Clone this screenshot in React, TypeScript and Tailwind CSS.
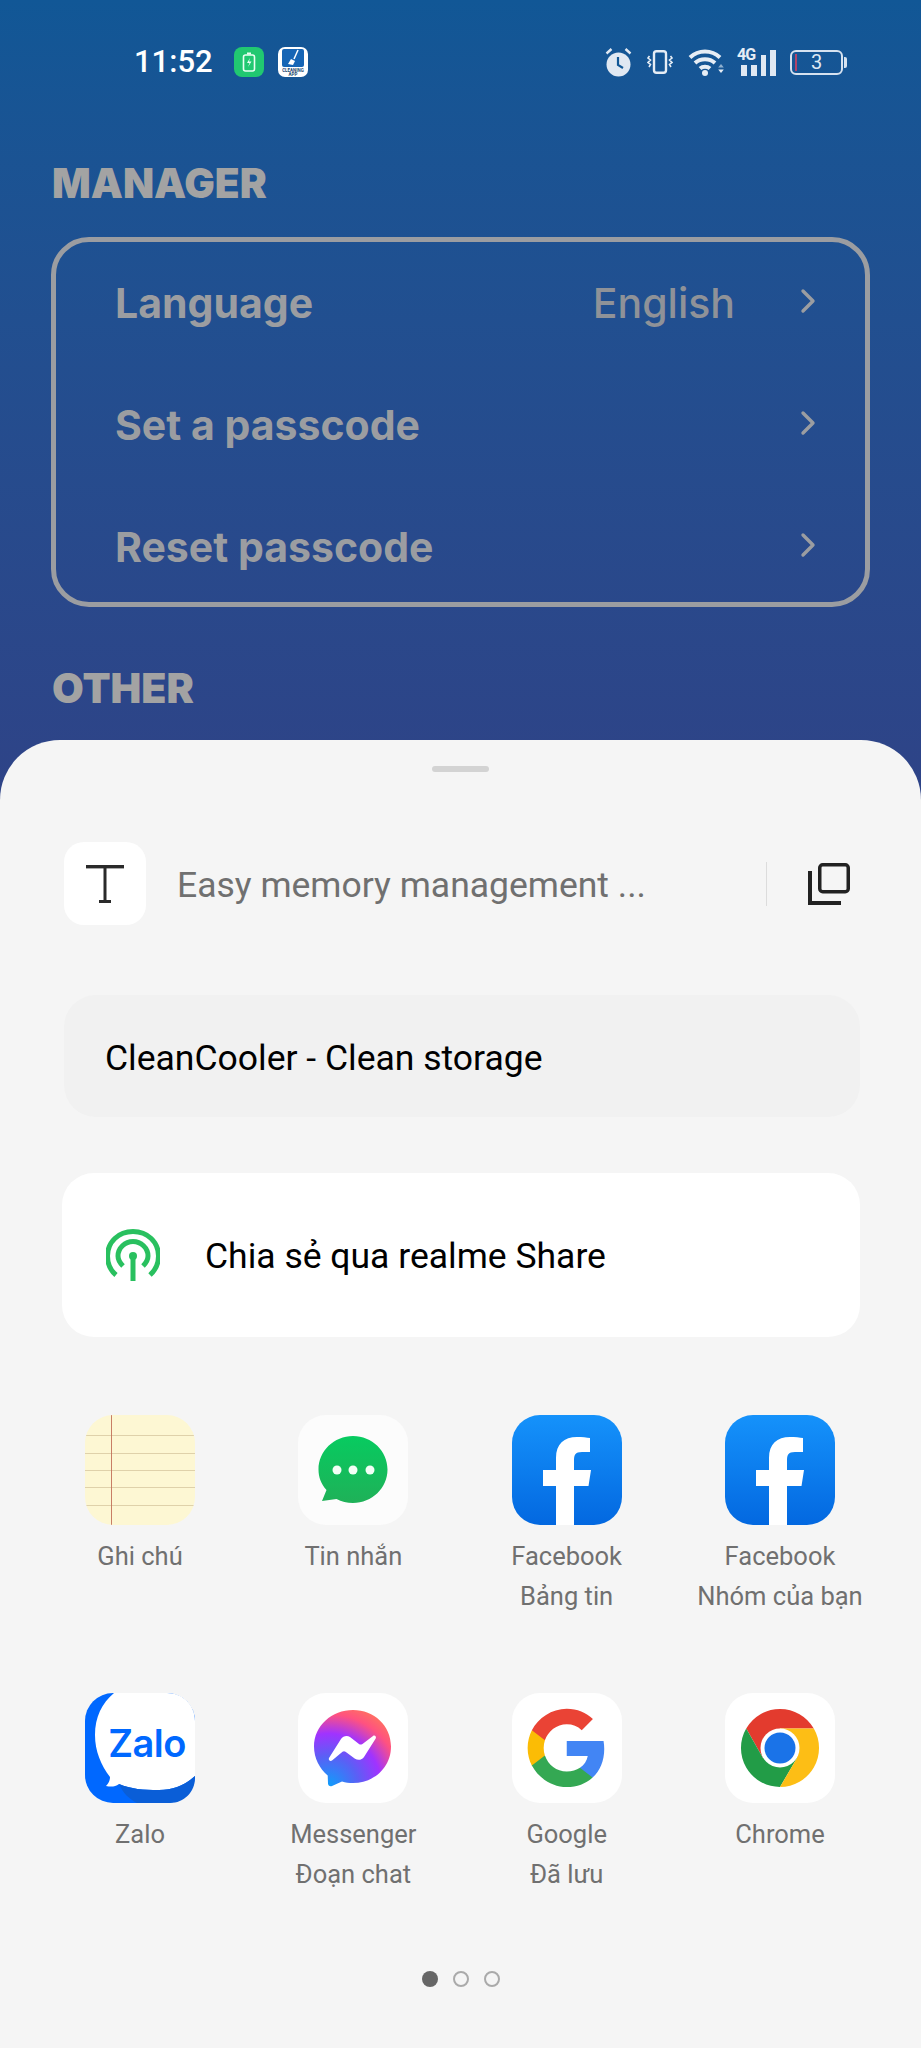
import React from "react";

const F = '"Roboto", "Liberation Sans", sans-serif';

function Chevron() {
  return (
    <svg width="16" height="26" viewBox="0 0 16 26" fill="none" stroke="#9b9da1" strokeWidth="3.400" strokeLinecap="round" strokeLinejoin="round" className="mb-[4px]">
      <path d="M3 3l10 10L3 23" />
    </svg>
  );
}

function Row({ label, value }: { label: string; value?: string }) {
  return (
    <div className="h-[122px] shrink-0 flex items-center pl-[59px] pr-[49px] justify-between">
      <span className="text-[41px] font-bold text-[#9b9da1] leading-none font-[Inter]">{label}</span>
      <div className="flex items-center gap-[65px]">
        {value && <span className="text-[41px] font-medium text-[#8f9298] leading-none font-[Inter]">{value}</span>}
        <Chevron />
      </div>
    </div>
  );
}

function Notes() {
  return (
    <div className="w-[110px] h-[110px] rounded-[28px] overflow-hidden">
      <svg width="110" height="110" viewBox="0 0 110 110">
        <rect width="110" height="110" fill="#fdf7d3" />
        {[20, 38, 55, 72, 90].map((y) => (
          <rect key={y} x="0" y={y} width="110" height="0.8" fill="#d8c7a0" />
        ))}
        <rect x="26" y="0" width="0.9" height="110" fill="#c2705a" />
      </svg>
    </div>
  );
}

function Sms() {
  return (
    <svg width="110" height="110" viewBox="0 0 110 110">
      <defs>
        <linearGradient id="sms" x1="0" y1="0" x2="0" y2="1">
          <stop offset="0" stopColor="#07cb60" />
          <stop offset="1" stopColor="#1fb158" />
        </linearGradient>
      </defs>
      <rect width="110" height="110" rx="28" fill="#fcfcfc" />
      <path d="M55 21c19 0 34.500 15 34.500 33.500S74 88 55 88c-6 0-11.500-1.500-16.500-4L24 86l4.500-11C23 69 20.500 62 20.500 54.500 20.500 36 36 21 55 21z" fill="url(#sms)" />
      <circle cx="39" cy="55" r="4.500" fill="#f2fff6" />
      <circle cx="55" cy="55" r="4.500" fill="#f2fff6" />
      <circle cx="72" cy="55" r="4.500" fill="#f2fff6" />
    </svg>
  );
}

function Facebook({ id }: { id: string }) {
  return (
    <svg width="110" height="110" viewBox="0 0 110 110">
      <defs>
        <linearGradient id={id} x1="0" y1="0" x2="0" y2="1">
          <stop offset="0" stopColor="#1592fb" />
          <stop offset="1" stopColor="#0368e0" />
        </linearGradient>
      </defs>
      <rect width="110" height="110" rx="28" fill={`url(#${id})`} />
      <path d="M44 110V71H31V55h13V43c0-14 8-21 21-21 5 0 10 .500 13 1v14h-8c-7 0-8 3-8 9v9h17l-2.500 16H62v39z" fill="#fff" />
    </svg>
  );
}

function Zalo() {
  return (
    <svg width="110" height="110" viewBox="0 0 110 110">
      <rect width="110" height="110" rx="28" fill="#0068ff" />
      <path d="M29 0H82C98 0 110 12 110 28V83C100 92 88 97 74 97 58 97 46 96 34 91 30 94 26 94 21 93 24 90 25 87 25 84 16 72 10 58 10 42 10 24 17 10 29 0Z" fill="#fff" />
      <path d="M34 91C46 96 58 97 74 97 88 97 100 92 110 83V85C110 99 99 110 85 110H52C44 106 38 100 34 91Z" fill="#0a5ed7" />
      <text x="62" y="64" textAnchor="middle" fontFamily="Inter, sans-serif" fontWeight="600" fontSize="38" letterSpacing="-0.500" fill="#0068ff">Zalo</text>
    </svg>
  );
}

function Messenger() {
  return (
    <svg width="110" height="110" viewBox="0 0 110 110">
      <defs>
        <radialGradient id="msg" cx="0.19" cy="0.99" r="1.1">
          <stop offset="0" stopColor="#0f9dfb" />
          <stop offset="0.35" stopColor="#5a60f5" />
          <stop offset="0.62" stopColor="#a033ff" />
          <stop offset="0.85" stopColor="#ff5280" />
          <stop offset="1" stopColor="#ff7061" />
        </radialGradient>
      </defs>
      <rect width="110" height="110" rx="28" fill="#fff" />
      <path d="M55 17c21 0 38 15.500 38 36.500S76 90 55 90c-4 0-7.500-.500-11-1.500L34 93c-2 1-4-.500-4-2.500l-.3-8C21.500 75.500 16 65 16 53.500 16 32.500 34 17 55 17z" fill="url(#msg)" />
      <path d="M31 65l12-19c2-3 6-4 9-2l9 7c1 .7 2 .7 3.500 0L75 43c1.700-1.300 3.800.7 2.700 2.500L66 64c-2 3-6 3.700-9 1.700l-9.500-7c-1-.7-2-.7-3 0L34 67.500c-1.800 1.300-4-.7-3-2.500z" fill="#fff" />
    </svg>
  );
}

function Google() {
  return (
    <svg width="110" height="110" viewBox="0 0 110 110">
      <rect width="110" height="110" rx="28" fill="#fff" />
      <g transform="translate(14 15) scale(1.63)">
        <path d="M48 25.100c0-1.700-.15-3.300-.43-4.900H25v9.300h12.900c-.56 3-2.250 5.500-4.800 7.200v6h7.750C45.400 38.500 48 32.400 48 25.100z" fill="#4285f4" />
        <path d="M25 48.500c6.500 0 11.900-2.150 15.850-5.800l-7.750-6c-2.150 1.450-4.900 2.300-8.100 2.300-6.200 0-11.500-4.200-13.400-9.850H3.600v6.200C7.550 42.800 15.700 48.500 25 48.500z" fill="#34a853" />
        <path d="M11.600 29.150c-.5-1.450-.75-3-.75-4.650s.27-3.200.75-4.650V13.650H3.600C2 16.850 1 20.550 1 24.500s1 7.650 2.600 10.850l8-6.200z" fill="#fbbc05" />
        <path d="M25 10c3.550 0 6.700 1.200 9.200 3.600l6.850-6.850C36.900 2.900 31.500.500 25 .500 15.700.500 7.550 6.200 3.600 13.650l8 6.200C13.500 14.200 18.800 10 25 10z" fill="#ea4335" />
      </g>
    </svg>
  );
}

function Chrome() {
  return (
    <svg width="110" height="110" viewBox="0 0 110 110">
      <rect width="110" height="110" rx="28" fill="#fff" />
      <path d="M21.200 35.500A39 39 0 0 1 88.800 35.500H55L38 65Z" fill="#e33b2e" />
      <path d="M21.200 35.500A39 39 0 0 0 55 94L72 65 38 65Z" fill="#229c47" />
      <path d="M88.800 35.500A39 39 0 0 1 55 94L72 65 55 35.500Z" fill="#fdbe15" />
      <circle cx="55" cy="55" r="19.500" fill="#fff" />
      <circle cx="55" cy="55" r="15.500" fill="#1a73e8" />
    </svg>
  );
}

function AppItem({ icon, l1, l2 }: { icon: React.ReactNode; l1: string; l2?: string }) {
  return (
    <div className="flex flex-col items-center w-[110px]">
      <div className="w-[110px] h-[110px]">{icon}</div>
      <div className="mt-[11px] text-[25.5px] leading-[40px] text-[#707070] text-center whitespace-nowrap">{l1}</div>
      {l2 && <div className="text-[25.5px] leading-[40px] text-[#707070] text-center whitespace-nowrap">{l2}</div>}
    </div>
  );
}

export default function App() {
  return (
    <div className="relative w-[921px] h-[2048px] overflow-hidden bg-[#f5f5f5]" style={{ fontFamily: F }}>
      <div className="h-[800px] bg-gradient-to-b from-[#115796] to-[#2e4387]">
        <div className="h-[125px] flex items-start pt-[47px] pl-[134px] justify-between">
          <div className="flex items-center h-[30px]">
            <span className="text-[31px] font-medium text-white leading-[30px]">11:52</span>
            <div className="ml-[21px] w-[30px] h-[30px] rounded-[8px] bg-[#21c871] flex items-center justify-center">
              <svg width="14" height="20" viewBox="0 0 14 20" fill="none">
                <rect x="1.500" y="3" width="11" height="16" rx="2" stroke="#e9fff3" strokeWidth="1.600" />
                <rect x="5" y="0.500" width="4" height="2" fill="#e9fff3" />
                <path d="M8 6l-3 5h2.500L6 15l3.500-5.500H7z" fill="#e9fff3" />
              </svg>
            </div>
            <div className="ml-[14px] w-[30px] h-[30px] rounded-[7px] bg-white overflow-hidden">
              <svg width="30" height="30" viewBox="0 0 30 30">
                <rect x="4" y="2" width="22" height="18" rx="2" fill="#1665b5" />
                <path d="M20 3l-4 9" stroke="#fff" strokeWidth="1.500" />
                <path d="M10 17l3-5 4 2-2 4z" fill="#fff" />
                <text x="15" y="24.500" textAnchor="middle" fontSize="4.500" fontWeight="700" fill="#24476f">CLEANING</text>
                <text x="15" y="29" textAnchor="middle" fontSize="4.500" fontWeight="700" fill="#24476f">APP</text>
              </svg>
            </div>
          </div>
          <div className="flex items-center h-[30px] mr-[74px]">
            <svg width="27" height="30" viewBox="0 0 27 30" fill="none">
              <circle cx="13.500" cy="17.500" r="12" fill="#e0e8f2" />
              <path d="M13 10v8l5 3" stroke="#115796" strokeWidth="2.200" />
              <path d="M1.500 6.500l5-4.500M25.500 6.500l-5-4.500" stroke="#e0e8f2" strokeWidth="2.400" />
            </svg>
            <svg width="26" height="24" viewBox="0 0 26 24" fill="none" stroke="#e6edf5" className="ml-[15px]">
              <rect x="7" y="1.200" width="12" height="21.600" rx="2.500" strokeWidth="2.400" />
              <path d="M2.500 6l-1.500 2 2.500 2-2.500 2.500 2.500 2-1.500 2.500M23.500 6l1.500 2-2.500 2 2.500 2.500-2.500 2 1.500 2.500" strokeWidth="1.600" />
            </svg>
            <svg width="38" height="28" viewBox="0 0 38 28" fill="none" className="ml-[15px]">
              <path d="M2 9.500c8.500-8 21.500-8 30 0M7 15c5.500-5 14.500-5 20 0M12 20.500c2.800-2.500 7.200-2.500 10 0" stroke="#e6edf5" strokeWidth="4" />
              <circle cx="17" cy="25" r="3" fill="#e6edf5" />
              <path d="M33 16l2.800 3.500h-5.600z" fill="#8fb0d0" />
              <path d="M33 25l2.800-3.500h-5.600z" fill="#e6edf5" />
            </svg>
            <div className="relative ml-[11px] w-[39px] h-[28px] flex items-end gap-[4px] justify-end">
              <span className="absolute left-0 -top-[1px] text-[16px] font-bold leading-[15px] tracking-[-1px] text-[#e6edf5]">4G</span>
              <span className="w-[6px] h-[11px] bg-[#e0e8f2]" />
              <span className="w-[6px] h-[11px] bg-[#e0e8f2]" />
              <span className="w-[5px] h-[21px] bg-[#e0e8f2]" />
              <span className="w-[6px] h-[26px] bg-[#e0e8f2]" />
            </div>
            <div className="flex items-center ml-[14px]">
              <div className="relative w-[53px] h-[25px] rounded-[6px] border-2 border-[#d6e2f0] flex items-center justify-center">
                <span className="absolute left-[3px] top-[2px] bottom-[2px] w-[2px] bg-[#b0446a]" />
                <span className="text-[20px] leading-none text-[#dfe8f3]">3</span>
              </div>
              <span className="ml-[1px] w-[3px] h-[11px] rounded-r-[2px] bg-[#d6e2f0]" />
            </div>
          </div>
        </div>
        <div className="ml-[52px] mt-[35px] text-[40.5px] font-black leading-[48px] text-[#a3a3a3] font-[Inter]">MANAGER</div>
        <div className="mx-[51px] mt-[29px] h-[370px] rounded-[38px] border-[5px] border-[#9b9da1] flex flex-col">
          <Row label="Language" value="English" />
          <Row label="Set a passcode" />
          <Row label="Reset passcode" />
        </div>
        <div className="ml-[52px] mt-[57px] text-[41px] font-black leading-[48px] text-[#a3a3a3] font-[Inter]">OTHER</div>
      </div>

      <div className="absolute left-0 right-0 top-[740px] bottom-0 rounded-t-[60px] bg-[#f5f5f5] flex flex-col">
        <div className="mx-auto mt-[26px] w-[57px] h-[6px] rounded-full bg-[#d3d3d3]" />
        <div className="mt-[70px] ml-[64px] mr-[71px] flex items-center h-[83px]">
          <div className="w-[82px] h-[83px] rounded-[20px] bg-white flex items-center justify-center">
            <svg width="40" height="40" viewBox="0 0 40 40" fill="#2a2a2a">
              <rect x="1" y="1" width="38" height="3.400" />
              <rect x="18.500" y="1" width="3" height="37" />
              <rect x="14" y="36" width="12" height="3" />
            </svg>
          </div>
          <div className="ml-[31px] mt-[4px] text-[35.5px] leading-none text-[#707070] flex-1 whitespace-nowrap">Easy memory management ...</div>
          <div className="w-[1px] h-[44px] bg-[#dcdcdc] mr-[41px]" />
          <svg width="42" height="42" viewBox="0 0 42 42" fill="none" stroke="#222">
            <rect x="11.750" y="1.750" width="28.500" height="27" rx="3" strokeWidth="3.500" />
            <path d="M2 8V40H33" strokeWidth="4" />
          </svg>
        </div>
        <div className="mt-[70px] ml-[64px] mr-[61px] h-[122px] rounded-[32px] bg-[#f1f1f1] flex items-center pl-[41px] pt-[5px] text-[35.5px] text-black">CleanCooler - Clean storage</div>
        <div className="mt-[56px] ml-[62px] mr-[61px] h-[164px] rounded-[32px] bg-white flex items-center pl-[44px]">
          <svg width="54" height="52" viewBox="0 0 54 52" fill="none" stroke="#29c05f" strokeWidth="5">
            <path d="M10 46C4 41 1.500 34 1.500 27 1.500 13 12.500 2.500 27 2.500S52.500 13 52.500 27c0 7-3 14-8.500 19" />
            <path d="M17 37c-3-3-5-6-5-10 0-8 7-14.500 15-14.500S42 19 42 27c0 4-2 7-5 10" />
            <circle cx="27" cy="27" r="4" fill="#29c05f" stroke="none" />
            <path d="M27 28v24" />
          </svg>
          <span className="ml-[45px] mt-[4px] text-[35.5px] text-black">Chia sẻ qua realme Share</span>
        </div>
        <div className="mt-[78px] ml-[85px] w-[750px] grid grid-cols-[110px_110px_110px_110px] grid-rows-[278px_278px] justify-between">
          <AppItem icon={<Notes />} l1="Ghi chú" />
          <AppItem icon={<Sms />} l1="Tin nhắn" />
          <AppItem icon={<Facebook id="fb1" />} l1="Facebook" l2="Bảng tin" />
          <AppItem icon={<Facebook id="fb2" />} l1="Facebook" l2="Nhóm của bạn" />
          <AppItem icon={<Zalo />} l1="Zalo" />
          <AppItem icon={<Messenger />} l1="Messenger" l2="Đoạn chat" />
          <AppItem icon={<Google />} l1="Google" l2="Đã lưu" />
          <AppItem icon={<Chrome />} l1="Chrome" />
        </div>
        <div className="flex justify-center items-center gap-[15px]">
          <span className="w-[16px] h-[16px] rounded-full bg-[#666]" />
          <span className="w-[16px] h-[16px] rounded-full border-2 border-[#aaa]" />
          <span className="w-[16px] h-[16px] rounded-full border-2 border-[#aaa]" />
        </div>
      </div>
    </div>
  );
}
